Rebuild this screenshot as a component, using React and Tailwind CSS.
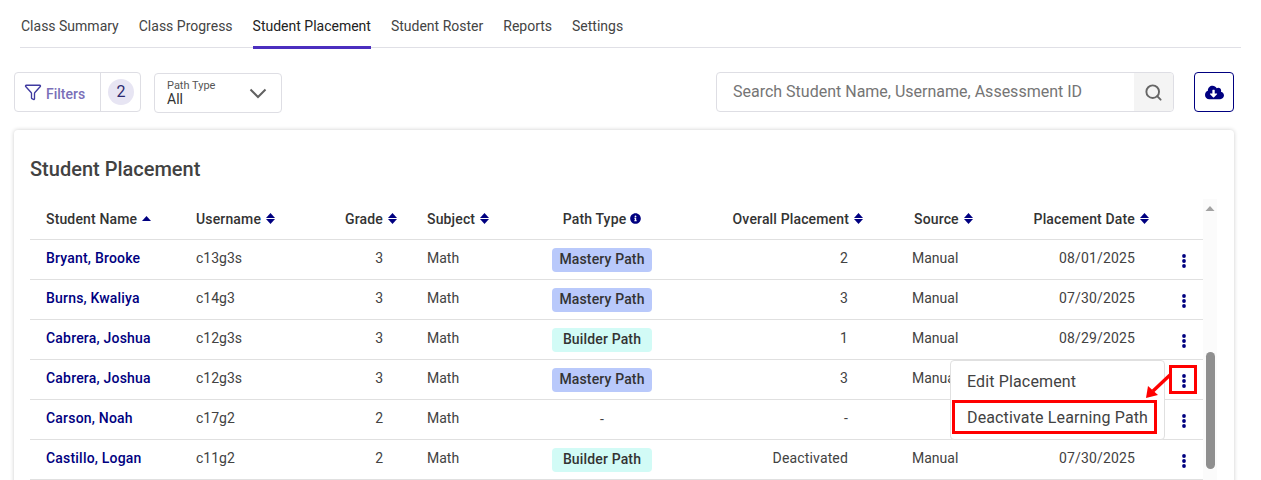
import React from "react";
import { Filter, Search } from "lucide-react";
import { FaCloudDownloadAlt, FaInfoCircle } from "react-icons/fa";

const tabs = ["Class Summary", "Class Progress", "Student Placement", "Student Roster", "Reports", "Settings"];

const rows = [
  { name: "Bryant, Brooke", user: "c13g3s", grade: 3, path: "Mastery Path", place: "2", source: "Manual", date: "08/01/2025" },
  { name: "Burns, Kwaliya", user: "c14g3", grade: 3, path: "Mastery Path", place: "3", source: "Manual", date: "07/30/2025" },
  { name: "Cabrera, Joshua", user: "c12g3s", grade: 3, path: "Builder Path", place: "1", source: "Manual", date: "08/29/2025" },
  { name: "Cabrera, Joshua", user: "c12g3s", grade: 3, path: "Mastery Path", place: "3", source: "Manual", date: "" },
  { name: "Carson, Noah", user: "c17g2", grade: 2, path: "-", place: "-", source: "", date: "" },
  { name: "Castillo, Logan", user: "c11g2", grade: 2, path: "Builder Path", place: "Deactivated", source: "Manual", date: "07/30/2025" },
];

const SortIcon = ({ up }) =>
  up ? (
    <svg width="9" height="5" viewBox="0 0 9 5" className="shrink-0">
      <path d="M4.5 0 L9 5 H0 Z" fill="#000080" />
    </svg>
  ) : (
    <svg width="9" height="11" viewBox="0 0 9 11" className="shrink-0">
      <path d="M4.5 0 L9 5 H0 Z" fill="#000080" />
      <path d="M4.5 11 L9 6 H0 Z" fill="#000080" />
    </svg>
  );

const Kebab = () => (
  <svg width="4" height="14" viewBox="0 0 4 14">
    <circle cx="2" cy="2" r="1.9" fill="#000080" />
    <circle cx="2" cy="7" r="1.9" fill="#000080" />
    <circle cx="2" cy="12" r="1.9" fill="#000080" />
  </svg>
);

const PathBadge = ({ path }) => {
  if (path === "-") return <span className="relative top-[-1px] text-[#424242]">-</span>;
  const color = path === "Mastery Path" ? "bg-[#b9c9fb]" : "bg-[#d2fbf6]";
  return (
    <span className={`inline-flex h-6 w-[100px] items-center justify-center rounded pb-[3px] font-medium tracking-[0.15px] text-[#333333] ${color}`}>
      {path}
    </span>
  );
};

export default function App() {
  return (
    <div className="relative h-[480px] overflow-hidden bg-white font-['Roboto',sans-serif] text-sm text-[#424242]">
      <div className="mx-[20px] flex h-[48px] gap-5 border-b border-[#e0e0e6] pl-px">
        {tabs.map((t) => (
          <div
            key={t}
            className={`flex h-[49px] items-center pt-[2px] ${
              t === "Student Placement" ? "border-b-[3px] border-[#4b2fbf] pt-[5px] text-[#222222]" : "text-[#444444]"
            }`}
          >
            {t}
          </div>
        ))}
      </div>

      <div className="mt-[24px] flex h-[40px] items-center pl-[14px] pr-[27px]">
        <div className="flex h-[40px] w-[127px] items-center rounded border border-[#dedee4]">
          <div className="flex h-full w-[86px] items-center gap-[4px] border-r border-[#dedee4] pl-[9px] font-medium text-[#7a6fb8]">
            <Filter size={18} strokeWidth={1.8} className="text-[#3f3aa0]" />
            <span className="pt-[3px]">Filters</span>
          </div>
          <span className="ml-[7px] flex h-[26px] w-[26px] items-center justify-center rounded-full bg-[#e7e5f3] text-base text-[#2c2a70]">
            2
          </span>
        </div>
        <div className="ml-[13px] mt-[2px] flex h-[40px] w-[128px] items-center justify-between rounded border border-[#dedee4] pl-[12px] pr-[14px]">
          <div className="leading-none">
            <div className="text-[11px] leading-[12px] text-[#555555]">Path Type</div>
            <div className="text-sm leading-[14px] text-[#333333]">All</div>
          </div>
          <svg width="18" height="11" viewBox="0 0 18 11">
            <path d="M1.5 1.5 L9 9 L16.5 1.5" stroke="#616161" strokeWidth="2" fill="none" />
          </svg>
        </div>
        <div className="ml-auto flex h-[40px] w-[458px] items-center rounded border border-[#dedee4]">
          <div className="flex-1 pl-[16px] text-base text-[#757575]">
            Search Student Name, Username, Assessment ID
          </div>
          <div className="flex h-full w-[39px] items-center justify-center rounded-r bg-[#f4f4f4]">
            <Search size={19} strokeWidth={2.4} className="text-[#666666]" />
          </div>
        </div>
        <div className="ml-[20px] flex h-[40px] w-[40px] items-center justify-center rounded border border-[#000080]">
          <FaCloudDownloadAlt size={19} className="text-[#000080]" />
        </div>
      </div>

      <div className="ml-[14px] mt-[18px] h-[500px] w-[1220px] rounded bg-white pl-[16px] shadow-[0_0_4px_rgba(0,0,0,0.2)]">
        <h2 className="pt-[26px] text-xl font-medium leading-[26px] text-[#424242]">Student Placement</h2>
        <div className="mt-[17px] flex">
          <table className="w-[1173px] table-fixed border-collapse">
            <colgroup>
              <col className="w-[150px]" />
              <col className="w-[140px]" />
              <col className="w-[91px]" />
              <col className="w-[100px]" />
              <col className="w-[182px]" />
              <col className="w-[203px]" />
              <col className="w-[104px]" />
              <col className="w-[163px]" />
              <col className="w-[40px]" />
            </colgroup>
            <thead>
              <tr className="h-[40px] border-b border-[#e0e0e0] tracking-[0.15px] text-[#333333]">
                <th className="pl-4 text-left font-medium">
                  <span className="flex items-center gap-[5px]">Student Name <SortIcon up /></span>
                </th>
                <th className="pl-4 text-left font-medium">
                  <span className="flex items-center gap-[5px]">Username <SortIcon /></span>
                </th>
                <th className="pr-[14px] font-medium">
                  <span className="flex items-center justify-end gap-[5px]">Grade <SortIcon /></span>
                </th>
                <th className="pl-4 font-medium">
                  <span className="flex items-center gap-[5px]">Subject <SortIcon /></span>
                </th>
                <th className="font-medium">
                  <span className="flex items-center justify-center gap-[4px]">
                    Path Type <FaInfoCircle size={11} className="text-[#000080]" />
                  </span>
                </th>
                <th className="pr-[33px] font-medium">
                  <span className="flex items-center justify-end gap-[5px]">Overall Placement <SortIcon /></span>
                </th>
                <th className="pl-[18px] font-medium">
                  <span className="flex items-center gap-[5px]">Source <SortIcon /></span>
                </th>
                <th className="pr-[14px] font-medium">
                  <span className="flex items-center justify-end gap-[5px]">Placement Date <SortIcon /></span>
                </th>
                <th />
              </tr>
            </thead>
            <tbody>
              {rows.map((r, i) => (
                <tr key={i} className="h-[40px] border-b border-[#e0e0e0]">
                  <td className="pb-[3px] pl-4 font-medium tracking-[0.2px] text-[#000080]">{r.name}</td>
                  <td className="pb-[3px] pl-4">{r.user}</td>
                  <td className="pb-[3px] pr-[28px] text-right">{r.grade}</td>
                  <td className="pb-[3px] pl-4">{r.path && "Math"}</td>
                  <td className="pt-[2px] text-center"><PathBadge path={r.path} /></td>
                  <td className="pb-[3px] pr-[48px] text-right tracking-[0.15px]">{r.place}</td>
                  <td className="pb-[3px] pl-4">{r.source}</td>
                  <td className="pb-[3px] pr-[28px] text-right tracking-[0.15px]">{r.date}</td>
                  <td className="pt-[3px]">
                    <div className="flex justify-center pl-[2px]"><Kebab /></div>
                  </td>
                </tr>
              ))}
            </tbody>
          </table>
          <div className="w-[14px] bg-[#fbfbfb] pt-[6px]">
            <svg width="14" height="7" viewBox="0 0 14 7"><path d="M7 1 L11.5 6 H2.5 Z" fill="#a3a3a3" /></svg>
            <div className="ml-[3px] mt-[140px] h-[117px] w-[9px] rounded-full bg-[#8f8f8f]" />
          </div>
        </div>
      </div>

      {/* row action menu */}
      <div className="absolute left-[950px] top-[360px] h-[80px] w-[215px] rounded border border-[#e0e0e0] bg-white text-base tracking-[0.14px] text-[#424242]">
        <div className="flex h-[41px] items-center pl-[16px]">Edit Placement</div>
        <div className="flex h-[31px] items-center pl-[16px]">Deactivate Learning Path</div>
      </div>

      {/* annotation */}
      <div className="absolute left-[952px] top-[400px] h-[34px] w-[205px] border-[3px] border-[#ff0000]" />
      <div className="absolute left-[1169px] top-[365px] h-[29px] w-[28px] border-[3px] border-[#ff0000]" />
      <svg className="absolute left-[1140px] top-[370px]" width="34" height="34" viewBox="0 0 34 34">
        <path d="M30 5 L13 21" stroke="#ff0000" strokeWidth="3.5" fill="none" />
        <path d="M6 28 L8 16 L18 25 Z" fill="#ff0000" />
      </svg>
    </div>
  );
}
